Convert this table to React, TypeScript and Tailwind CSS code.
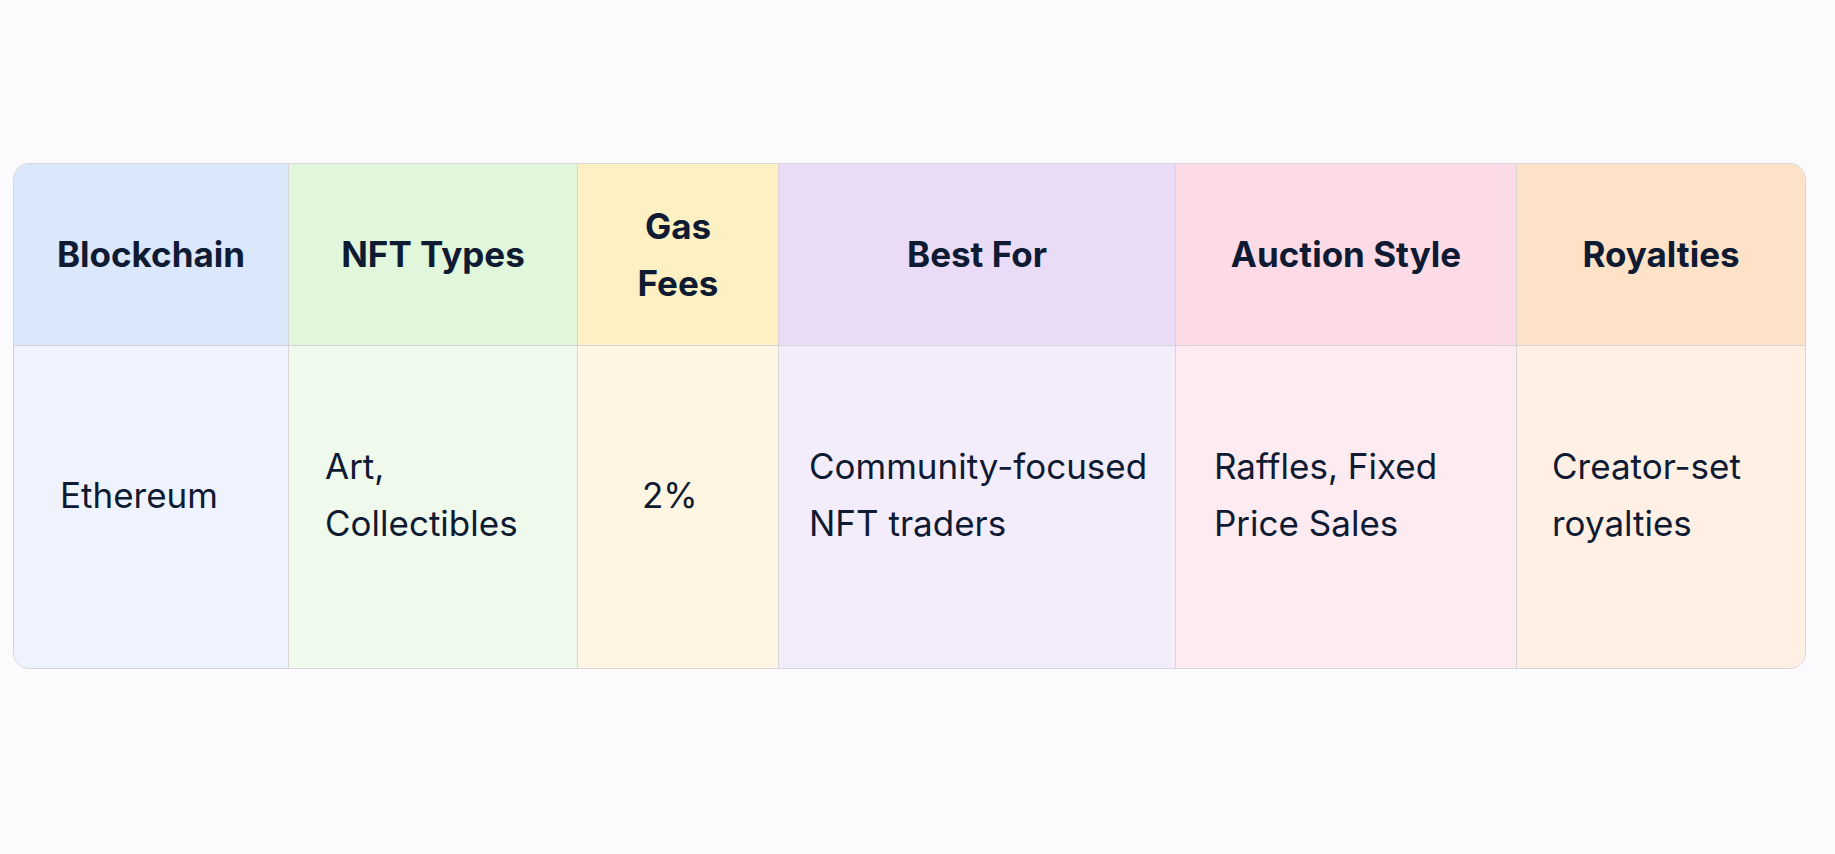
const columns = [
  { head: 'Blockchain', body: 'Ethereum', headBg: 'bg-[#dbe7fa]', bodyBg: 'bg-[#eef3fd]', pad: 'pl-[46px] pr-[20px]' },
  { head: 'NFT Types', body: 'Art, Collectibles', headBg: 'bg-[#e1f7dc]', bodyBg: 'bg-[#eff9ec]', pad: 'pl-[36px] pr-[36px]' },
  { head: 'Gas Fees', body: '2%', headBg: 'bg-[#fdf0c2]', bodyBg: 'bg-[#fef6e2]', pad: 'pl-[64px] pr-[20px]' },
  { head: 'Best For', body: 'Community-focused NFT traders', headBg: 'bg-[#eadcf7]', bodyBg: 'bg-[#f3edfb]', pad: 'pl-[30px] pr-[16px]' },
  { head: 'Auction Style', body: 'Raffles, Fixed Price Sales', headBg: 'bg-[#fcdbe7]', bodyBg: 'bg-[#fcebf1]', pad: 'pl-[38px] pr-[39px]' },
  { head: 'Royalties', body: 'Creator-set royalties', headBg: 'bg-[#fde2c7]', bodyBg: 'bg-[#fef0e4]', pad: 'pl-[35px] pr-[36px]' },
];

export default function App() {
  return (
    <div className="min-h-screen bg-[#fbfbfd] pl-[13px] pt-[163px] text-[#0f1a33] [font-family:Inter,'Noto_Sans',sans-serif]">
      <div className="w-[1793px] overflow-hidden rounded-2xl border border-[#d6d4d9]">
        <div className="grid grid-cols-[275px_289px_201px_397px_341px_288px]">
          {columns.map((c, i) => (
            <div
              key={c.head}
              className={`flex h-[182px] items-center justify-center border-b border-[#d6d4d9] px-8 text-center text-[35px] font-bold leading-[57px] ${c.headBg} ${i < columns.length - 1 ? 'border-r' : ''}`}
            >
              {c.head}
            </div>
          ))}
          {columns.map((c, i) => (
            <div
              key={c.body}
              className={`flex h-[322px] items-center pb-[24px] text-[35px] leading-[57px] ${c.pad} ${c.bodyBg} ${i < columns.length - 1 ? 'border-r border-[#d6d4d9]' : ''}`}
            >
              <span>{c.body}</span>
            </div>
          ))}
        </div>
      </div>
    </div>
  );
}
